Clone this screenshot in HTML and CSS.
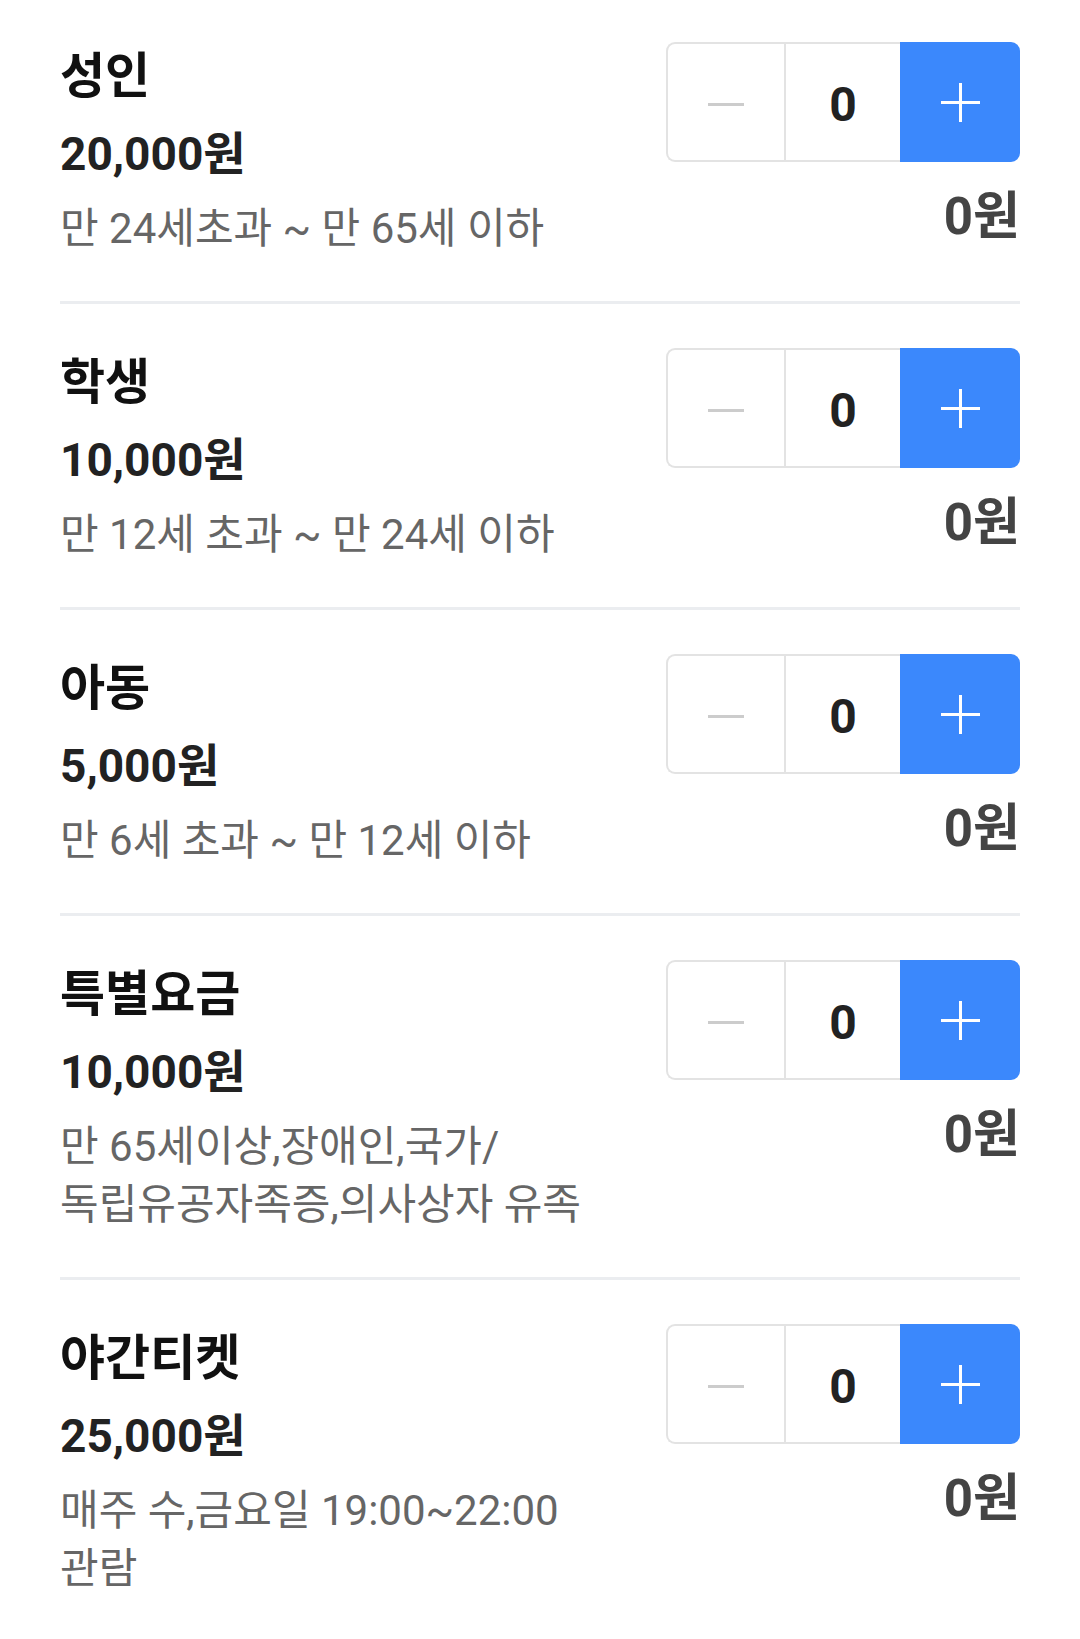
FILE: index.html
```html
<!DOCTYPE html>
<html>
<head lang="ko">
    <meta charset="UTF-8">
    <title>관람권 선택</title>
    <link rel="stylesheet" href="styles.css">
</head>
<body>
<div id="list">
    <div class="item" data-price="20000">
        <div class="info">
            <h3 class="name">성인</h3>
            <p class="price">20,000원</p>
            <p class="desc">만 24세초과 ~ 만 65세 이하</p>
        </div>
        <div class="count">
            <div class="stepper">
                <button class="minus"><svg width="36" height="3" viewBox="0 0 36 3"><rect width="36" height="3" fill="#cccccc"/></svg></button>
                <span class="value">0</span>
                <button class="plus"><svg width="39" height="39" viewBox="0 0 39 39"><rect x="0" y="18" width="39" height="3" fill="#fff"/><rect x="18" y="0" width="3" height="39" fill="#fff"/></svg></button>
            </div>
            <p class="total">0원</p>
        </div>
    </div>
    <div class="item" data-price="10000">
        <div class="info">
            <h3 class="name">학생</h3>
            <p class="price">10,000원</p>
            <p class="desc">만 12세 초과 ~ 만 24세 이하</p>
        </div>
        <div class="count">
            <div class="stepper">
                <button class="minus"><svg width="36" height="3" viewBox="0 0 36 3"><rect width="36" height="3" fill="#cccccc"/></svg></button>
                <span class="value">0</span>
                <button class="plus"><svg width="39" height="39" viewBox="0 0 39 39"><rect x="0" y="18" width="39" height="3" fill="#fff"/><rect x="18" y="0" width="3" height="39" fill="#fff"/></svg></button>
            </div>
            <p class="total">0원</p>
        </div>
    </div>
    <div class="item" data-price="5000">
        <div class="info">
            <h3 class="name">아동</h3>
            <p class="price">5,000원</p>
            <p class="desc">만 6세 초과 ~ 만 12세 이하</p>
        </div>
        <div class="count">
            <div class="stepper">
                <button class="minus"><svg width="36" height="3" viewBox="0 0 36 3"><rect width="36" height="3" fill="#cccccc"/></svg></button>
                <span class="value">0</span>
                <button class="plus"><svg width="39" height="39" viewBox="0 0 39 39"><rect x="0" y="18" width="39" height="3" fill="#fff"/><rect x="18" y="0" width="3" height="39" fill="#fff"/></svg></button>
            </div>
            <p class="total">0원</p>
        </div>
    </div>
    <div class="item" data-price="10000">
        <div class="info">
            <h3 class="name">특별요금</h3>
            <p class="price">10,000원</p>
            <p class="desc">만 65세이상,장애인,국가/<br>독립유공자족증,의사상자 유족</p>
        </div>
        <div class="count">
            <div class="stepper">
                <button class="minus"><svg width="36" height="3" viewBox="0 0 36 3"><rect width="36" height="3" fill="#cccccc"/></svg></button>
                <span class="value">0</span>
                <button class="plus"><svg width="39" height="39" viewBox="0 0 39 39"><rect x="0" y="18" width="39" height="3" fill="#fff"/><rect x="18" y="0" width="3" height="39" fill="#fff"/></svg></button>
            </div>
            <p class="total">0원</p>
        </div>
    </div>
    <div class="item" data-price="25000">
        <div class="info">
            <h3 class="name">야간티켓</h3>
            <p class="price">25,000원</p>
            <p class="desc">매주 수,금요일 19:00~22:00<br>관람</p>
        </div>
        <div class="count">
            <div class="stepper">
                <button class="minus"><svg width="36" height="3" viewBox="0 0 36 3"><rect width="36" height="3" fill="#cccccc"/></svg></button>
                <span class="value">0</span>
                <button class="plus"><svg width="39" height="39" viewBox="0 0 39 39"><rect x="0" y="18" width="39" height="3" fill="#fff"/><rect x="18" y="0" width="3" height="39" fill="#fff"/></svg></button>
            </div>
            <p class="total">0원</p>
        </div>
    </div>
</div>
<script>
    var aItem=document.getElementsByClassName("item");
    function format(n){
        return n.toString().replace(/\B(?=(\d{3})+(?!\d))/g,",")+"원";
    }
    for(var i=0;i<aItem.length;i++){
        (function(oItem){
            var price=parseInt(oItem.getAttribute("data-price"));
            var oValue=oItem.getElementsByClassName("value")[0];
            var oTotal=oItem.getElementsByClassName("total")[0];
            var num=0;
            function change(){
                oValue.innerHTML=num;
                oTotal.innerHTML=format(num*price);
            }
            oItem.getElementsByClassName("minus")[0].onclick=function(){
                if(num>0){
                    num--;
                    change();
                }
            };
            oItem.getElementsByClassName("plus")[0].onclick=function(){
                num++;
                change();
            };
        })(aItem[i]);
    }
</script>
</body>
</html>
```

FILE: styles.css
```css
*{
    margin: 0;
    padding: 0;
}
body{
    background: #fff;
    font-family: Roboto, "Noto Sans CJK KR", sans-serif;
}
#list{
    margin-top: -2px;
    padding: 0 60px;
}
.item{
    display: flex;
    justify-content: space-between;
    padding: 44px 0 43px;
    border-bottom: 3px solid #ebedf0;
}
.item:last-child{
    border-bottom: 0;
}
.name{
    font-size: 49px;
    line-height: 70px;
    font-weight: 700;
    color: #111;
}
.price{
    font-size: 46px;
    line-height: 84px;
    font-weight: 700;
    color: #222;
}
.desc{
    margin-top: 4px;
    font-size: 42px;
    line-height: 58px;
    color: #666;
}
.count{
    display: flex;
    flex-direction: column;
    align-items: flex-end;
}
.stepper{
    display: flex;
    height: 120px;
}
.stepper button{
    border: 0;
    background: none;
    cursor: pointer;
    display: flex;
    align-items: center;
    justify-content: center;
}
.minus{
    box-sizing: border-box;
    width: 118px;
    padding-top: 4px;
    border: 2px solid #e3e3e3 !important;
    border-right: 0 !important;
    border-radius: 9px 0 0 9px;
}
.value{
    box-sizing: border-box;
    width: 116px;
    padding-top: 4px;
    border: 2px solid #e3e3e3;
    border-right: 0;
    display: flex;
    align-items: center;
    justify-content: center;
    font-size: 48px;
    font-weight: 700;
    color: #222;
}
.stepper .plus{
    width: 120px;
    background: #3b88fc;
    border-radius: 0 9px 9px 0;
}
.total{
    margin-top: 20px;
    font-size: 51px;
    line-height: 70px;
    font-weight: 700;
    color: #444;
}
```
